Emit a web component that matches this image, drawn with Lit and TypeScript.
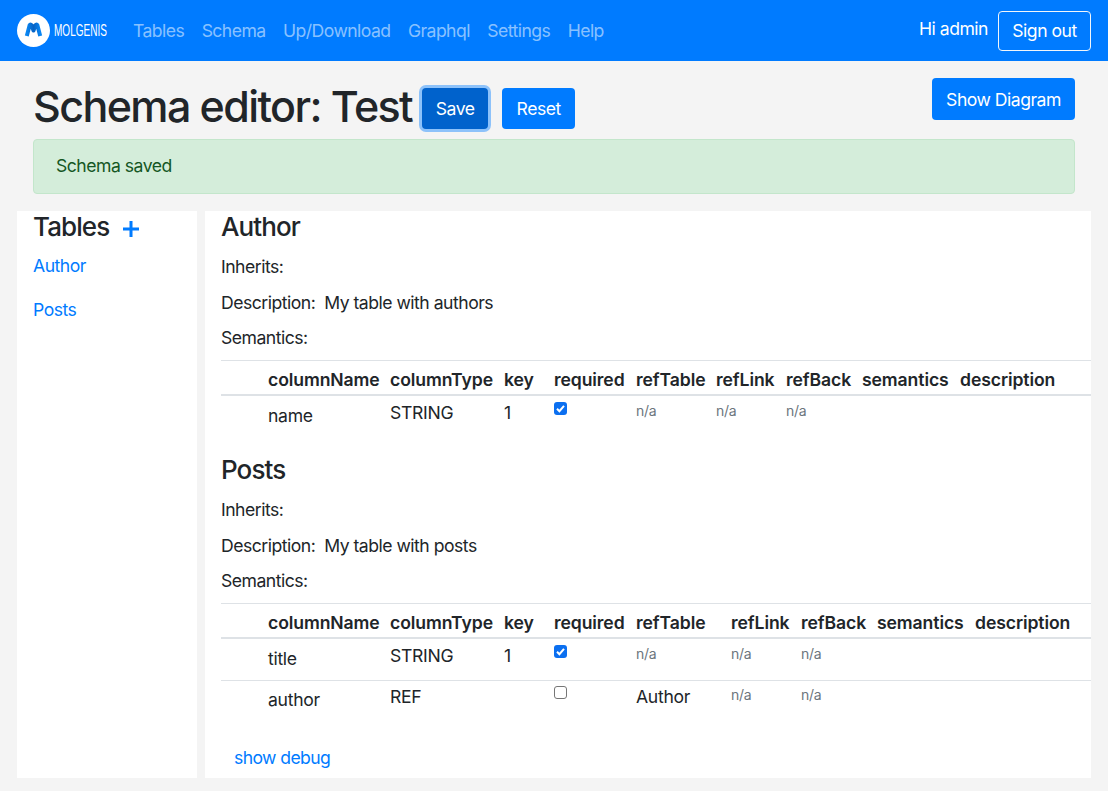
import { LitElement, html, css } from "lit";
import { customElement } from "lit/decorators.js";

type Row = { name: string; type: string; key: string; req: boolean; ref: string };
type Tbl = { name: string; desc: string; cols: number[]; rows: Row[] };

const HEAD = ["", "columnName", "columnType", "key", "required", "refTable", "refLink", "refBack", "semantics", "description"];
const TABLES: Tbl[] = [
  {
    name: "Author",
    desc: "My table with authors",
    cols: [47, 122, 114, 50, 82, 80, 70, 76, 98, 131],
    rows: [{ name: "name", type: "STRING", key: "1", req: true, ref: "" }],
  },
  {
    name: "Posts",
    desc: "My table with posts",
    cols: [47, 122, 114, 50, 82, 95, 70, 76, 98, 116],
    rows: [
      { name: "title", type: "STRING", key: "1", req: true, ref: "" },
      { name: "author", type: "REF", key: "", req: false, ref: "Author" },
    ],
  },
];

@customElement("app-root")
export class AppRoot extends LitElement {
  static styles = css`
    :host {
      display: block;
      height: 791px;
      overflow: hidden;
      background: #f4f4f4;
      color: #212529;
      font-family: Inter, "Liberation Sans", sans-serif;
      font-size: 17.6px;
      letter-spacing: -0.5px;
    }
    .nav {
      height: 61px;
      background: #007bff;
      display: flex;
      align-items: center;
      padding: 0 17px;
      box-sizing: border-box;
    }
    .logo { display: flex; align-items: center; gap: 4px; width: 116px; flex: none; }
    .logo svg { flex: none; }
    .logo-name {
      color: #fff;
      font-family: "Liberation Sans", sans-serif;
      font-size: 17px;
      letter-spacing: 0;
      width: 60px;
      transform: scaleX(0.59);
      transform-origin: left center;
      white-space: nowrap;
    }
    .links { display: flex; gap: 17.4px; flex: 1; margin-top: -1px; letter-spacing: -0.55px; }
    .links a { color: rgba(255, 255, 255, 0.55); }
    .hi { color: #fff; margin-right: 10px; margin-top: -4px; }
    .signout {
      height: 40px;
      width: 93px;
      box-sizing: border-box;
      border: 1px solid #f2f6fa;
      border-radius: 4px;
      color: #fff;
      display: flex;
      align-items: center;
      justify-content: center;
      background: transparent;
    }
    .head {
      display: flex;
      padding: 17px 33px 0;
      height: 78px;
      box-sizing: border-box;
      align-items: flex-start;
      justify-content: space-between;
    }
    .title { display: flex; align-items: flex-start; }
    h1 {
      margin: 1px 0 0;
      font-size: 43px;
      font-weight: 500;
      line-height: 55px;
      letter-spacing: -1.6px;
    }
    .btn {
      background: #007bff;
      color: #fff;
      border-radius: 4px;
      display: flex;
      align-items: center;
      justify-content: center;
      height: 42px;
      box-sizing: border-box;
    }
    .save {
      width: 66px;
      height: 41px;
      margin-left: 10px;
      margin-top: 10px;
      background: #0062cc;
      box-shadow: 0 0 0 3px rgba(38, 143, 255, 0.5);
    }
    .reset { width: 73px; height: 41px; margin-left: 14px; margin-top: 10px; }
    .diagram { width: 143px; }
    .alert {
      margin: 0 33px;
      height: 55px;
      box-sizing: border-box;
      background: #d4edda;
      border: 1px solid #c3e6cb;
      border-radius: 4px;
      color: #155724;
      display: flex;
      align-items: center;
      padding: 0 22px 2px;
    }
    .body { display: flex; gap: 8px; margin: 17px 17px 0; height: 567px; }
    .side { width: 180px; background: #fff; padding: 0 16px; box-sizing: border-box; flex: none; }
    .side h2 { display: flex; align-items: center; gap: 14px; margin-bottom: 0; }
    h2 {
      margin: 0;
      font-size: 26px;
      line-height: 32px;
      font-weight: 500;
      letter-spacing: -0.9px;
    }
    .plus { display: block; margin-top: 4px; }
    .side a { display: block; color: #007bff; line-height: 26px; margin-top: 18px; }
    .side h2 + a { margin-top: 10px; }
    .main { flex: 1; background: #fff; padding-left: 16px; min-width: 0; }
    .sec { min-height: 243px; }
    .sec p { margin: 0; line-height: 26px; height: 35.5px; white-space: pre; }
    .sec h2 { margin-bottom: 11px; }
    table {
      border-collapse: collapse;
      table-layout: fixed;
      width: 870px;
      margin-top: -0.5px;
      letter-spacing: -0.1px;
    }
    th {
      font-weight: 600;
      text-align: left;
      padding: 4px 0 0;
      height: 34px;
      box-sizing: border-box;
      border-top: 1px solid #dee2e6;
      border-bottom: 2px solid #dee2e6;
      white-space: nowrap;
    }
    td { padding: 0; height: 41px; vertical-align: top; border-top: 1px solid #dee2e6; letter-spacing: -0.3px; }
    tr.first td { border-top: none; }
    .t { display: block; margin-top: 4px; line-height: 26px; }
    .tn { display: block; margin-top: 7px; line-height: 26px; }
    .na { display: block; font-size: 14px; color: #6c757d; margin-top: 4px; line-height: 21px; }
    .box {
      display: block;
      box-sizing: border-box;
      width: 13px;
      height: 13px;
      margin-top: 6px;
      border-radius: 3px;
      border: 1px solid #767676;
      background: #fff;
    }
    .box.on { background: #0b6ff0; border: none; }
    .box svg { display: block; }
    tr.next .t { margin-top: 3px; }
    tr.next .tn { margin-top: 6px; }
    tr.next .na { margin-top: 3px; }
    tr.next .box { margin-top: 5px; }
    .debug { color: #007bff; margin: 0 0 0 13px; line-height: 26px; padding-top: 23px; letter-spacing: -0.6px; }
  `;

  private logo() {
    return html`<svg width="33" height="33" viewBox="0 0 33 33">
      <defs>
        <linearGradient id="m" x1="0" y1="0" x2="1" y2="0">
          <stop offset="0" stop-color="#0a86f2"></stop>
          <stop offset="0.5" stop-color="#0662c4"></stop>
          <stop offset="1" stop-color="#0a86f2"></stop>
        </linearGradient>
      </defs>
      <circle cx="16.5" cy="16.5" r="16.5" fill="#fff"></circle>
      <path d="M9.8 22 L12.6 11.2 Q13.4 9.6 14.6 11.2 L16.5 16.5 L18.4 11.2 Q19.6 9.6 20.4 11.2 L23.2 22" fill="none" stroke="url(#m)" stroke-width="4" stroke-linejoin="round"></path>
    </svg>`;
  }

  private section(t: Tbl) {
    return html`<div class="sec">
      <h2>${t.name}</h2>
      <p>Inherits:</p>
      <p>Description:  ${t.desc}</p>
      <p>Semantics:</p>
      <table>
        <colgroup>${t.cols.map((w) => html`<col style="width:${w}px" />`)}</colgroup>
        <thead><tr>${HEAD.map((h) => html`<th>${h}</th>`)}</tr></thead>
        <tbody>
          ${t.rows.map(
            (r, i) => html`<tr class=${i === 0 ? "first" : "next"}>
              <td></td>
              <td><span class="tn">${r.name}</span></td>
              <td><span class="t">${r.type}</span></td>
              <td><span class="t">${r.key}</span></td>
              <td>
                <span class="box ${r.req ? "on" : ""}">
                  ${r.req
                    ? html`<svg width="13" height="13" viewBox="0 0 13 13"><path d="M3 6.8 L5.4 9.2 L10 3.8" fill="none" stroke="#fff" stroke-width="2"></path></svg>`
                    : ""}
                </span>
              </td>
              <td>${r.ref ? html`<span class="t">${r.ref}</span>` : html`<span class="na">n/a</span>`}</td>
              <td><span class="na">n/a</span></td>
              <td><span class="na">n/a</span></td>
              <td></td>
              <td></td>
            </tr>`
          )}
        </tbody>
      </table>
    </div>`;
  }

  render() {
    return html`
      <div class="nav">
        <div class="logo">${this.logo()}<span class="logo-name">MOLGENIS</span></div>
        <div class="links">
          <a>Tables</a><a>Schema</a><a>Up/Download</a><a>Graphql</a><a>Settings</a><a>Help</a>
        </div>
        <span class="hi">Hi admin</span>
        <div class="signout">Sign out</div>
      </div>
      <div class="head">
        <div class="title">
          <h1>Schema editor: Test</h1>
          <div class="btn save">Save</div>
          <div class="btn reset">Reset</div>
        </div>
        <div class="btn diagram">Show Diagram</div>
      </div>
      <div class="alert">Schema saved</div>
      <div class="body">
        <div class="side">
          <h2>Tables
            <svg class="plus" width="16" height="16" viewBox="0 0 16 16"><path d="M8 0 V16 M0 8 H16" stroke="#007bff" stroke-width="3"></path></svg>
          </h2>
          <a>Author</a>
          <a>Posts</a>
        </div>
        <div class="main">
          ${TABLES.map((t) => this.section(t))}
          <p class="debug">show debug</p>
        </div>
      </div>
    `;
  }
}
